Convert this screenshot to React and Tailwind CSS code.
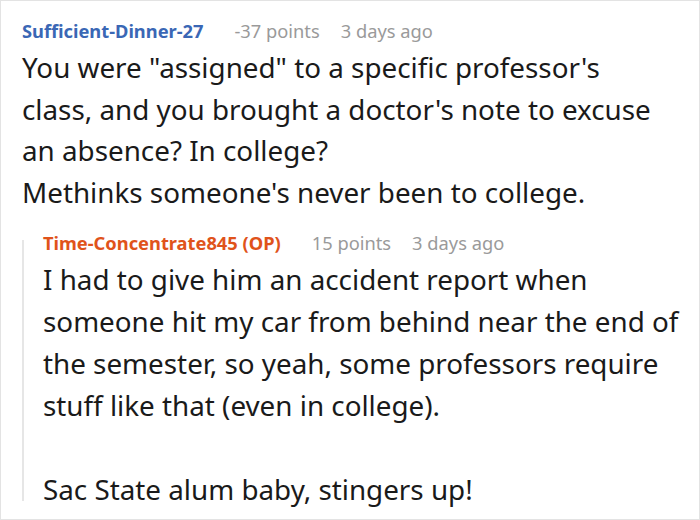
export default function App() {
  return (
    <div className="w-[700px] h-[520px] bg-white overflow-hidden" style={{ fontFamily: '"Noto Sans", sans-serif' }}>
      <div className="w-[700px] h-[520px] border border-[#e3e3e3] bg-white pl-[21px] pt-[17px]">
        <div className="flex items-baseline text-[18.3px] leading-[26px] whitespace-nowrap">
          <span className="font-bold text-[#3a67b5]">Sufficient-Dinner-27</span>
          <span className="ml-[31px] text-[#9a9a9a]">-37 points</span>
          <span className="ml-[21px] text-[#9a9a9a]">3 days ago</span>
        </div>
        <div className="mt-[3px] text-[27.8px] leading-[41.5px] text-[#1a1a1a] whitespace-nowrap">
          <p>You were "assigned" to a specific professor's<br />class, and you brought a doctor's note to excuse<br />an absence? In college?</p>
          <p>Methinks someone's never been to college.</p>
        </div>
        <div className="mt-[17px] flex">
          <div className="w-[2px] bg-[#e6e6e6] mt-[10px] h-[261px]"></div>
          <div className="pl-[19px]">
            <div className="flex items-baseline text-[18.3px] leading-[26px] whitespace-nowrap">
              <span className="font-bold text-[#e0531b]">Time-Concentrate845 (OP)</span>
              <span className="ml-[31px] text-[#9a9a9a]">15 points</span>
              <span className="ml-[21px] text-[#9a9a9a]">3 days ago</span>
            </div>
            <div className="mt-[2px] text-[27.8px] leading-[42px] text-[#1a1a1a] whitespace-nowrap">
              <p>I had to give him an accident report when<br />someone hit my car from behind near the end of<br />the semester, so yeah, some professors require<br />stuff like that (even in college).</p>
              <p className="mt-[42px]">Sac State alum baby, stingers up!</p>
            </div>
          </div>
        </div>
      </div>
    </div>
  );
}
